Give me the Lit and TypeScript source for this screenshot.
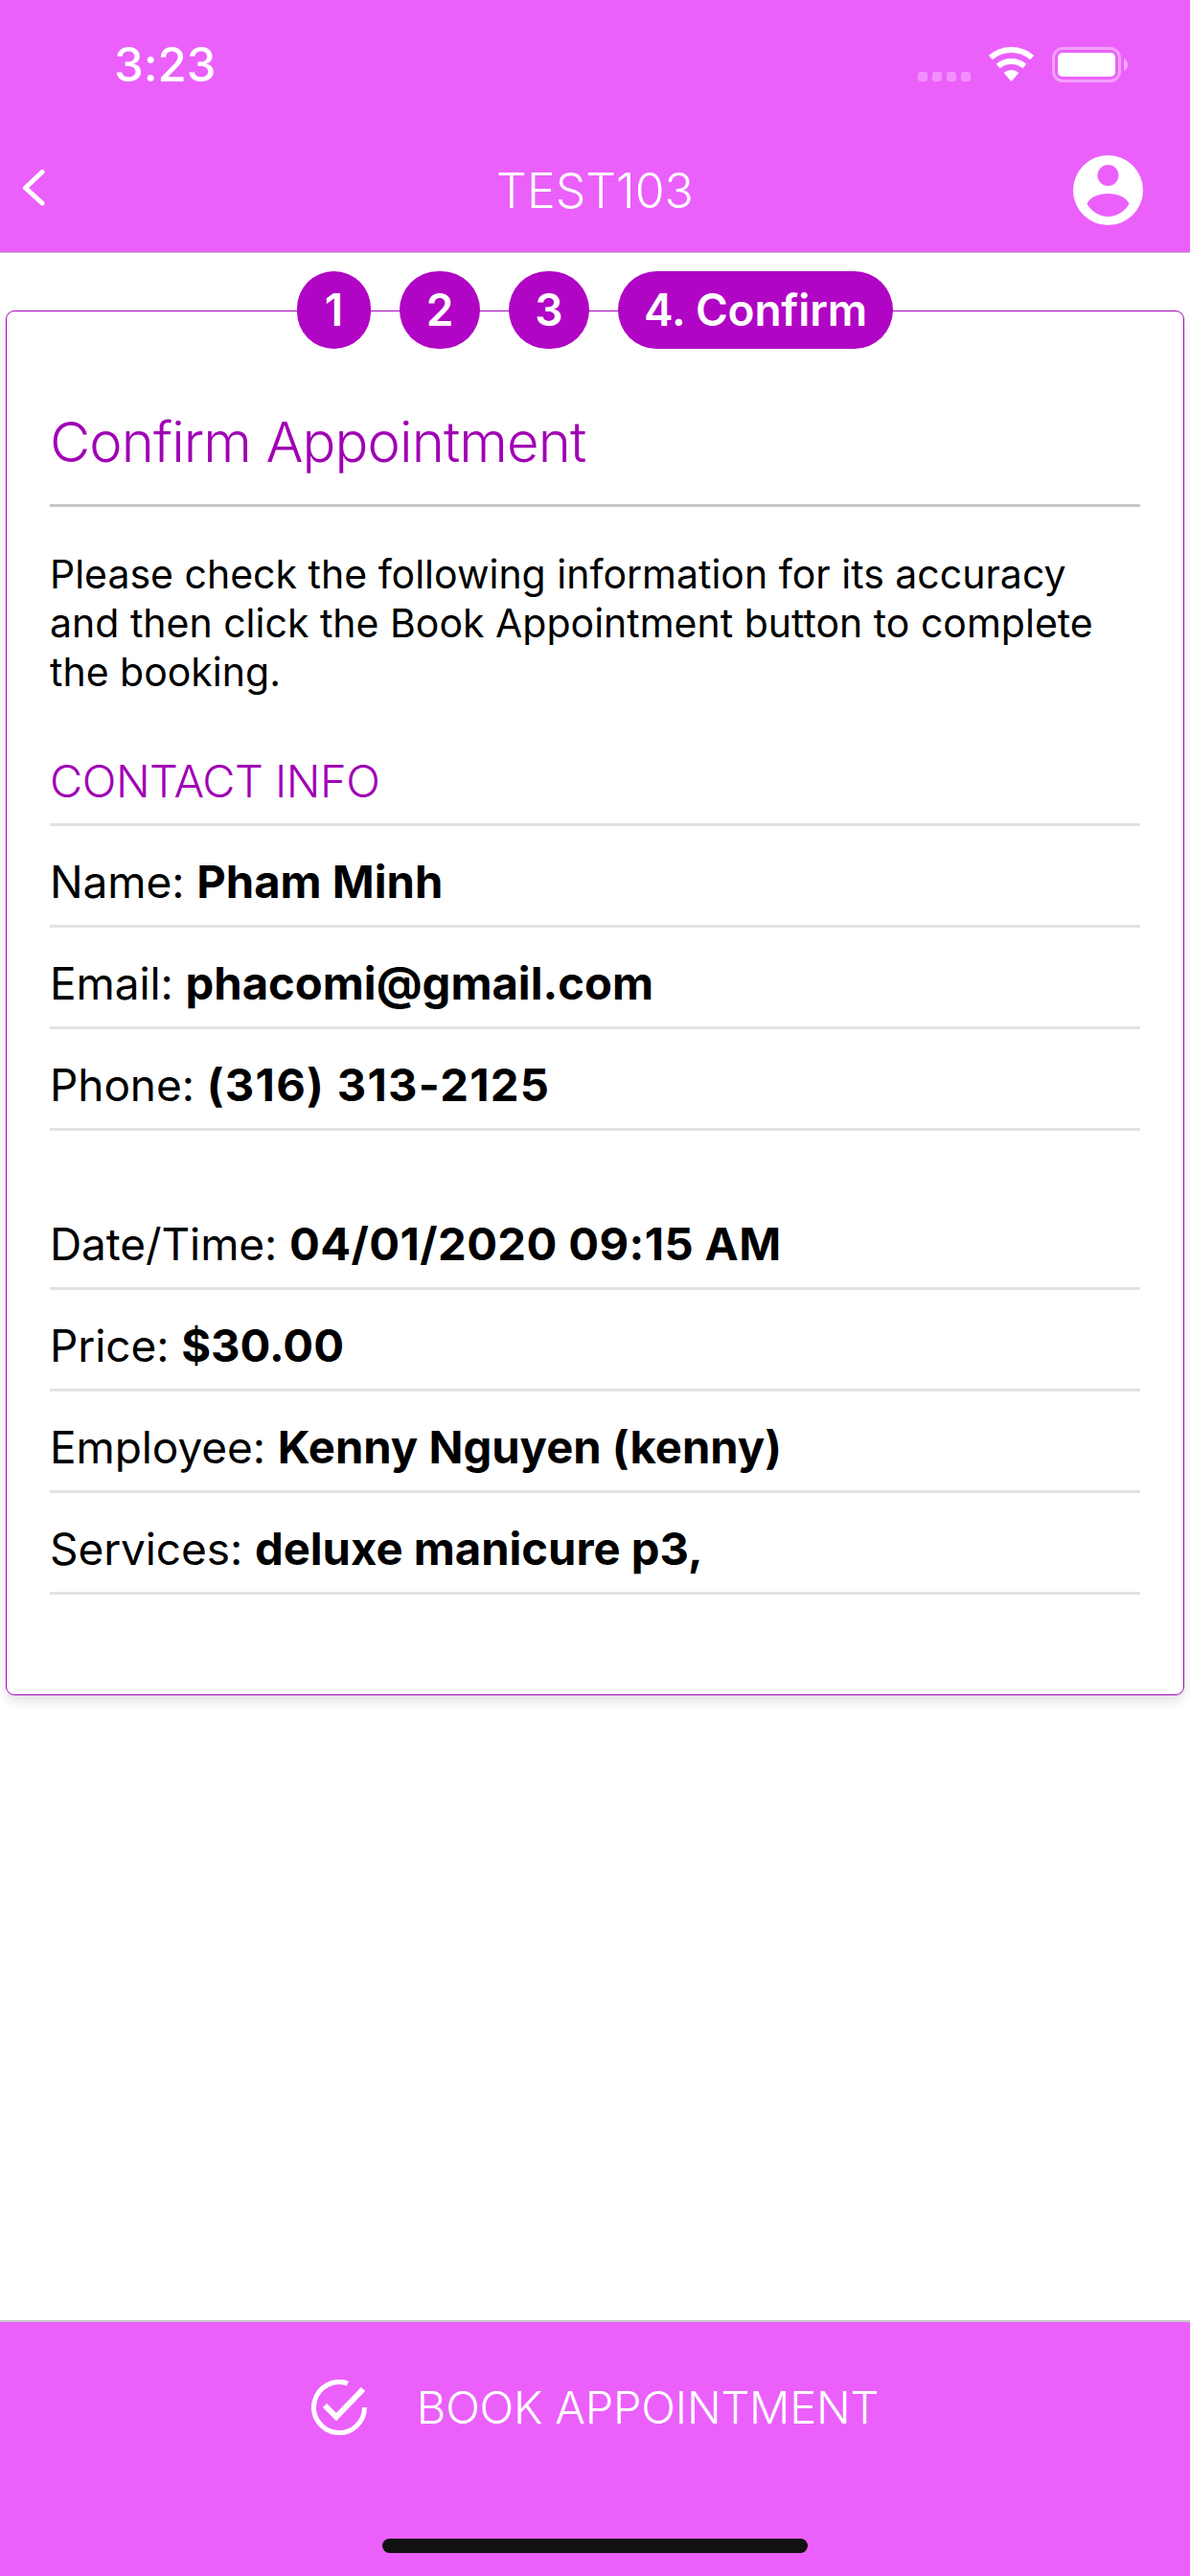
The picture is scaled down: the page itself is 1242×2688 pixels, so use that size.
import { LitElement, html, css } from "lit";
import { customElement } from "lit/decorators.js";

const contact = [
  ["Name:", "Pham Minh", ""],
  ["Email:", "phacomi@gmail.com", ""],
  ["Phone:", "(316) 313-2125", "phone"],
];
const details = [
  ["Date/Time:", "04/01/2020 09:15 AM", "date"],
  ["Price:", "$30.00", ""],
  ["Employee:", "Kenny Nguyen (kenny)", ""],
  ["Services:", "deluxe manicure p3,", ""],
];

@customElement("app-root")
export class AppRoot extends LitElement {
  static styles = css`
    :host {
      display: flex;
      flex-direction: column;
      width: 1242px;
      height: 2688px;
      background: #fff;
      font-family: Inter, "Noto Sans", sans-serif;
      font-feature-settings: "calt" 0;
      color: #000;
    }
    .top {
      background: #eb60fb;
      height: 263px;
      border-bottom: 1px solid #bdbdbd;
      display: flex;
      flex-direction: column;
      color: #fff;
      flex: none;
    }
    .status {
      height: 132px;
      display: flex;
      align-items: flex-start;
      justify-content: space-between;
      padding: 0 65px 0 119px;
    }
    .time {
      font-size: 49px;
      font-weight: 500;
      line-height: 60px;
      margin-top: 38px;
    }
    .sys {
      display: flex;
      align-items: flex-end;
      margin-top: 49px;
      height: 37px;
    }
    .dots {
      display: flex;
      gap: 5px;
      margin-right: 19px;
      margin-bottom: 1px;
    }
    .dots i {
      width: 10px;
      height: 10px;
      border-radius: 3px;
      background: rgba(255, 255, 255, 0.3);
    }
    .wifi {
      width: 47px;
      height: 37px;
      margin-right: 19px;
      display: block;
    }
    .battery {
      width: 79px;
      height: 37px;
      display: block;
    }
    .nav {
      flex: 1;
      display: grid;
      grid-template-columns: 1fr auto 1fr;
      align-items: center;
      padding: 0 24px;
    }
    .nav .back {
      width: 23px;
      height: 39px;
      display: block;
      margin-top: -4px;
    }
    .nav .title {
      font-size: 50px;
      font-weight: 300;
      line-height: 60px;
      margin-top: 3px;
    }
    .nav .avatar {
      width: 73px;
      height: 73px;
      display: block;
      margin: 2px 25px 0 0;
      justify-self: end;
    }
    main {
      flex: 1;
      padding: 19px 6px 0;
      display: flex;
      flex-direction: column;
    }
    .steps {
      display: flex;
      justify-content: center;
      gap: 30px;
      height: 81px;
      position: relative;
      z-index: 1;
    }
    .step {
      width: 84px;
      height: 81px;
      box-sizing: border-box;
      border-radius: 41px;
      background: #b005c4;
      color: #fff;
      font-size: 46px;
      font-weight: 600;
      display: flex;
      align-items: center;
      justify-content: center;
      padding-bottom: 2px;
    }
    .step.first {
      width: 77px;
    }
    .step.wide {
      width: 287px;
      letter-spacing: -0.2px;
    }
    .card {
      margin-top: -40px;
      height: 1445px;
      box-sizing: border-box;
      border: 1px solid #a30ab8;
      border-radius: 9px;
      padding: 100px 45px 0;
      box-shadow: 0 6px 12px rgba(0, 0, 0, 0.12);
      background: #fff;
    }
    h1 {
      margin: 0;
      font-size: 58px;
      font-weight: 300;
      letter-spacing: -0.9px;
      line-height: 72px;
      color: #a000b4;
      padding-bottom: 29px;
      border-bottom: 3px solid #c8c8c8;
    }
    p {
      margin: 0;
      padding-top: 45px;
      font-size: 41px;
      line-height: 51px;
    }
    h2 {
      margin: 0;
      padding: 60px 0 16px;
      font-size: 47px;
      font-weight: 300;
      letter-spacing: -0.5px;
      line-height: 56px;
      color: #a000b4;
      border-bottom: 3px solid #e2e2e2;
    }
    .row {
      height: 106px;
      box-sizing: border-box;
      padding-top: 30px;
      border-bottom: 3px solid #e2e2e2;
      font-size: 46px;
      letter-spacing: -0.1px;
      line-height: 56px;
      white-space: pre;
    }
    .row b {
      font-weight: 700;
      font-size: 47.2px;
      letter-spacing: 0;
    }
    .row.phone b {
      letter-spacing: 1.3px;
    }
    .row.date b {
      letter-spacing: 0.4px;
    }
    .spacer {
      height: 60px;
    }
    .bottom {
      flex: none;
      height: 267px;
      box-sizing: border-box;
      background: #eb60fb;
      border-top: 2px solid #c8c8c8;
      color: #fff;
      display: flex;
      flex-direction: column;
      align-items: center;
    }
    .book {
      display: flex;
      align-items: center;
      gap: 52px;
      margin-top: 59px;
      height: 60px;
      font-size: 47px;
      font-weight: 300;
      letter-spacing: -0.2px;
    }
    .book span {
      margin-top: -2px;
    }
    .book svg {
      width: 58px;
      height: 58px;
      display: block;
    }
    .home {
      width: 444px;
      height: 15px;
      border-radius: 8px;
      background: #111;
      margin-top: 107px;
    }
  `;

  row(r: string[]) {
    return html`<div class="row ${r[2]}">${r[0]} <b>${r[1]}</b></div>`;
  }

  render() {
    return html`
      <header class="top">
        <div class="status">
          <span class="time">3:23</span>
          <div class="sys">
            <div class="dots"><i></i><i></i><i></i><i></i></div>
            <svg class="wifi" viewBox="0 0 47 37">
              <path d="M23.5 36 15.600 26.900a12 12 0 0 1 15.800 0Z" fill="#fff" />
              <path d="M9.700 20.100a21 21 0 0 1 27.600 0" fill="none" stroke="#fff" stroke-width="6" />
              <path d="M1.900 11.100a33 33 0 0 1 43.200 0" fill="none" stroke="#fff" stroke-width="6" />
            </svg>
            <svg class="battery" viewBox="0 0 79 37">
              <rect x="1.500" y="1.500" width="69" height="34" rx="10" fill="none" stroke="#fff" stroke-opacity=".4" stroke-width="3" />
              <rect x="6" y="6" width="60" height="25" rx="5" fill="#fff" />
              <path d="M75 12c2.500 1 4 3.500 4 6.500s-1.500 5.500-4 6.500Z" fill="#fff" fill-opacity=".45" />
            </svg>
          </div>
        </div>
        <div class="nav">
          <svg class="back" viewBox="0 0 23 39">
            <path d="M20 3.500 2.500 20 20 36" fill="none" stroke="#fff" stroke-width="5" stroke-linecap="round" stroke-linejoin="round" />
          </svg>
          <span class="title">TEST103</span>
          <svg class="avatar" viewBox="0 0 73 73">
            <path fill="#fff" fill-rule="evenodd" d="M36.500 0a36.500 36.500 0 1 1 0 73 36.500 36.500 0 0 1 0-73ZM36.500 10a11 11 0 1 0 0 22 11 11 0 0 0 0-22ZM36.500 40c-10 0-18.500 3.500-22 10.500 4.500 8 12.500 13.500 22 13.500s17.500-5.500 22-13.500c-3.500-7-12-10.500-22-10.500Z" />
          </svg>
        </div>
      </header>
      <main>
        <div class="steps">
          <div class="step first">1</div>
          <div class="step">2</div>
          <div class="step">3</div>
          <div class="step wide">4. Confirm</div>
        </div>
        <section class="card">
          <h1>Confirm Appointment</h1>
          <p>Please check the following information for its accuracy and then click the Book Appointment button to complete the booking.</p>
          <h2>CONTACT INFO</h2>
          ${contact.map((r) => this.row(r))}
          <div class="spacer"></div>
          ${details.map((r) => this.row(r))}
        </section>
      </main>
      <footer class="bottom">
        <div class="book">
          <svg viewBox="0 0 58 58">
            <path d="M38 4.100A26.500 26.500 0 1 0 55.500 29" fill="none" stroke="#fff" stroke-width="5" />
            <path d="M14 27 26 39 54 10" fill="none" stroke="#fff" stroke-width="6" />
          </svg>
          <span>BOOK APPOINTMENT</span>
        </div>
        <div class="home"></div>
      </footer>
    `;
  }
}
